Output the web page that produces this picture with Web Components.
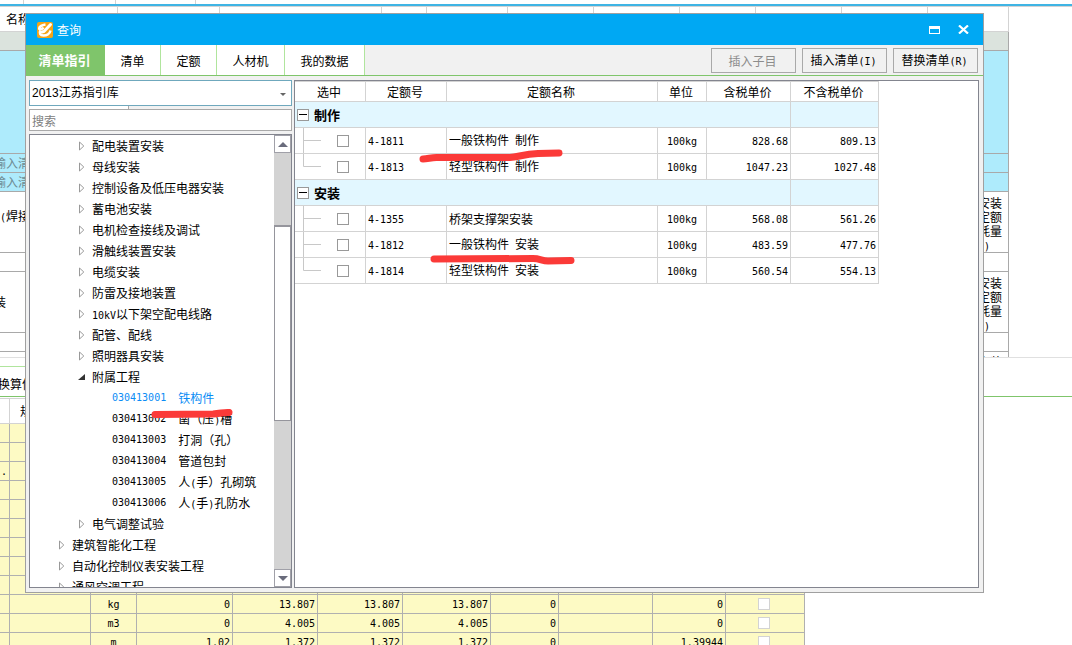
<!DOCTYPE html>
<html lang="zh-CN">
<head>
<meta charset="utf-8">
<title>查询</title>
<style>
html, body { margin: 0; height: 100%; }
body { font: 12px/14px "Noto Sans CJK SC", sans-serif; color: #000; background: #fff; }
</style>
</head>
<body>
<app-shell></app-shell>
<script>
const COMMON = `
  *, *::before, *::after { box-sizing: border-box; }
  button, input, select { font: inherit; color: inherit; margin: 0; border-radius: 0; }
  .n { font: 10px/12px "DejaVu Sans Mono", monospace; white-space: pre; }
  table { border-collapse: separate; border-spacing: 0; table-layout: fixed; }
  th, td { padding: 0; font-weight: normal; overflow: hidden; white-space: nowrap; }
  .tick { appearance: none; display: block; width: 12px; height: 12px; background: #fff; border: 1px solid #999; }
`;
/* Latin runs are set in the narrow monospace face. */
const mix = s => s.replace(/[ -~]+/g, m => `<span class="n">${m}</span>`);
const cols = list => `<colgroup>${list.map(w => `<col style="width:${w}px">`).join('')}</colgroup>`;
const sum = list => list.reduce((a, b) => a + b, 0);

class Base extends HTMLElement {
  constructor() {
    super();
    const t = document.createElement('template');
    t.innerHTML = `<style>${COMMON}${this.css()}</style>${this.html()}`;
    this.attachShadow({ mode: 'open' }).append(t.content.cloneNode(true));
  }
}

customElements.define('bill-grid', class extends Base {
  css() { return `
    :host { display: block; height: 352px; flex: none; overflow: hidden; border-top: 1px solid #d3d3d3; border-bottom: 1px solid #e0e0e0; }
    th { height: 25px; border-right: 1px solid #d3d3d3; border-bottom: 1px solid #d3d3d3; text-align: left; padding-left: 6px; }
    td { height: 19px; border-right: 1px solid #a9a9a9; border-bottom: 1px solid #a9a9a9; }
    .sum td { background: #dbe3dd; }
    .cyan td { background: #aeebfc; color: #6f8b94; }
    .big td { height: 103px; }
    .tall td { height: 61px; }
    .cut { text-indent: -6px; }
    .two { padding-bottom: 12px; }
    .note { padding: 4px 6px 0 0; vertical-align: top; }
    .note div { width: 24px; height: 56px; margin-left: auto; white-space: pre; }
    .note .n { line-height: 1px; }
    .part td { height: 19px; }
    .part .note { padding-top: 3px; }
    .part .note div { height: 14px; }
  `; }
  html() {
    const w = [118, 102, 162, 45, 81, 86, 86, 76, 86, 86, 81];
    const row = (cls, a = '', cutCls = '', z = '') =>
      `<tr class="${cls}"><td class="${cutCls}">${mix(a)}</td><td colspan="9"></td><td class="note">${z && `<div>${z}</div>`}</td></tr>`;
    const note = '安装\n定额\n耗量\n<span class="n"> )</span>';
    return `<table style="width:${sum(w)}px">${cols(w)}
      <thead><tr><th>名称</th>${'<th></th>'.repeat(10)}</tr></thead><tbody>
      ${row('sum')}${row('cyan big')}${row('cyan', '输入清单', 'cut')}${row('cyan', '输入清单', 'cut')}
      ${row('tall', '(焊接', 'two', note)}${row('')}${row('tall', '装', 'cut', note)}${row('')}${row('part', '', '', '安装')}
      </tbody></table>`;
  }
});

customElements.define('detail-grid', class extends Base {
  css() { return `
    :host { display: block; }
    nav { height: 39px; border-bottom: 1px solid #7fc56b; padding-top: 8px; }
    nav button { display: block; width: 60px; height: 30px; padding: 4px 0 0 4px; border: 0; border-top: 1px solid #b0e59d; border-right: 1px solid #b0e59d; background: #fff; text-indent: -6px; text-align: left; }
    table { margin-top: 1px; border-top: 1px solid #d3d3d3; }
    th { height: 25px; border-right: 1px solid #d3d3d3; border-bottom: 1px solid #d3d3d3; }
    td { height: 19px; line-height: 12px; background: #fdfac4; border-right: 1px solid #b0b0b0; border-bottom: 1px solid #b0b0b0; text-align: right; padding-right: 2px; }
    td.c { text-align: center; padding-right: 0; }
    .tick { margin: 0 auto; border-color: #d3d3d3; }
  `; }
  html() {
    const w = [10, 81, 46, 96, 85, 85, 88, 68, 94, 73, 79];
    const blank = a => `<tr><td>${mix(a)}</td>${'<td></td>'.repeat(10)}</tr>`;
    const row = (u, q, v, t) => `<tr><td></td><td></td><td class="c">${mix(u)}</td>${[q, v, v, v, '0', '', t].map(x => `<td>${mix(x)}</td>`).join('')}<td><input class="tick" type="checkbox" aria-label="${u}"></td></tr>`;
    return `<nav><button>换算信息</button></nav>
    <table style="width:${sum(w)}px">${cols(w)}
      <thead><tr><th></th><th>规格及型号</th>${'<th></th>'.repeat(9)}</tr></thead><tbody>
      ${blank('')}${blank('')}${blank('.')}${blank('').repeat(6)}
      ${row('kg', '0', '13.807', '0')}${row('m3', '0', '4.005', '0')}${row('m', '1.02', '1.372', '1.39944')}
      </tbody></table>`;
  }
});

customElements.define('guide-tree', class extends Base {
  css() { return `
    :host { display: flex; flex: 1; min-height: 0; border: 1px solid #83858f; background: #fff; }
    ul { list-style: none; margin: 0; padding: 0; flex: 1; overflow: hidden; }
    li { height: 21px; line-height: 20px; display: flex; align-items: center; white-space: pre; }
    li svg { width: 8px; height: 10px; flex: none; margin-right: 6px; }
    .l0 { padding-left: 28px; }
    .l1 { padding-left: 48px; }
    .l2 { padding-left: 82px; gap: 12px; }
    .on { color: #0a8cf5; }
    .bar { width: 17px; flex: none; background: #d3d3d3; display: flex; flex-direction: column; }
    .bar button { height: 18px; padding: 0; border: 1px solid #a0a0a8; background: #fff; display: grid; place-items: center; }
    .bar i { height: 72px; }
    .bar b { height: 196px; background: #fff; border: 1px solid #95959c; border-top-width: 2px; margin-bottom: auto; }
  `; }
  html() {
    const closed = '<svg viewBox="0 0 8 10"><path d="M1.500 1v8L5.800 5z" fill="#fff" stroke="#999"/></svg>';
    const open = '<svg viewBox="0 0 8 10"><path d="M7 2v6H0z" fill="#333"/></svg>';
    const items = [
      ...['配电装置安装', '母线安装', '控制设备及低压电器安装', '蓄电池安装', '电机检查接线及调试', '滑触线装置安装', '电缆安装', '防雷及接地装置', '10kV以下架空配电线路', '配管、配线', '照明器具安装'].map(t => [1, t]),
      [1, '附属工程', open],
      ...['铁构件', '凿（压)槽', '打洞（孔）', '管道包封', '人(手）孔砌筑', '人(手)孔防水'].map((t, i) => [2, t, '', `03041300${i + 1}`]),
      [1, '电气调整试验'], [0, '建筑智能化工程'], [0, '自动化控制仪表安装工程'], [0, '通风空调工程']
    ];
    return `<ul>${items.map(([l, t, ic = closed, code]) =>
      `<li class="l${l}${code === '030413001' ? ' on' : ''}">${ic}${code ? `<span class="n">${code}</span>` : ''}<span>${mix(t)}</span></li>`).join('')}</ul>
    <div class="bar"><button aria-label="向上"><svg width="10" height="5"><path d="M5 0l5 5H0z" fill="#6a6c7c"/></svg></button><i></i><b></b>
    <button aria-label="向下"><svg width="10" height="5"><path d="M0 0h10L5 5z" fill="#6a6c7c"/></svg></button></div>`;
  }
});

customElements.define('quota-table', class extends Base {
  css() { return `
    :host { display: block; flex: 1; min-width: 0; border: 1px solid #83858f; background: #fff; overflow: hidden; }
    table { border-top: 1px solid #d3d3d3; }
    th, td { height: 26px; border-right: 1px solid #d3d3d3; border-bottom: 1px solid #d3d3d3; }
    thead th { height: 20px; padding-right: 2px; }
    td.l { padding-left: 2px; }
    td.c { text-align: center; }
    td.r { text-align: right; padding-right: 2px; }
    .g th, .g td { background: #e2f7ff; }
    .g div { display: flex; align-items: center; height: 25px; padding-left: 2px; gap: 5px; font: bold 13px/16px "Noto Sans CJK SC", sans-serif; }
    .g button { width: 12px; height: 12px; padding: 0; background: #fff; border: 1px solid #999; display: grid; place-items: center; }
    .pick { display: flex; align-items: center; gap: 16px; height: 25px; }
    .pick svg { display: block; flex: none; }
  `; }
  html() {
    const w = [71, 81, 211, 49, 84, 88];
    const group = t => `<tr class="g"><th colspan="5"><div><button aria-label="折叠"><svg width="8" height="2"><path d="M0 0h8v1H0z"/></svg></button>${t}</div></th><td></td></tr>`;
    const row = (code, name, a, b, last) => `<tr><td><div class="pick"><svg width="26" height="25"><path d="M8.500 0V${last ? '12.500' : '25'}M8.500 12.500H26" fill="none" stroke="#c8c8c8"/></svg><input class="tick" type="checkbox" aria-label="${code}"></div></td>
      <td class="l">${mix(code)}</td><td class="l">${mix(name)}</td><td class="c">${mix('100kg')}</td><td class="r">${mix(a)}</td><td class="r">${mix(b)}</td></tr>`;
    return `<table style="width:${sum(w)}px">${cols(w)}<thead><tr>${['选中', '定额号', '定额名称', '单位', '含税单价', '不含税单价'].map(t => `<th>${t}</th>`).join('')}</tr></thead><tbody>
      ${group('制作')}${row('4-1811', '一般铁构件 制作', '828.68', '809.13')}${row('4-1813', '轻型铁构件 制作', '1047.23', '1027.48', 1)}
      ${group('安装')}${row('4-1355', '桥架支撑架安装', '568.08', '561.26')}${row('4-1812', '一般铁构件 安装', '483.59', '477.76')}${row('4-1814', '轻型铁构件 安装', '560.54', '554.13', 1)}
      </tbody></table>`;
  }
});

customElements.define('query-dialog', class extends Base {
  css() { return `
    :host { display: flex; flex-direction: column; background: #f1f1f1; border: 1px solid #a0a0a0; }
    header { height: 31px; flex: none; background: #00a8f3; color: #fff; display: flex; align-items: center; padding: 0 14px 0 11px; gap: 4px; }
    header span { flex: 1; }
    header div { display: flex; gap: 18px; }
    header button { border: 0; background: none; padding: 0; width: 11px; height: 12px; display: grid; place-items: center; }
    .tabs { height: 31px; flex: none; display: flex; border-bottom: 1px solid #7fc56b; }
    .tabs button { border: 0; border-right: 1px solid #b0e59d; background: #fff; padding: 2px 0 0; width: 56px; }
    .tabs .m { width: 68px; }
    .tabs .w { width: 80px; }
    .tabs .on { width: 79px; background: #7fc56b; color: #fff; font-weight: bold; font-size: 13px; border: 0; padding: 0 2px 0 0; }
    .acts { margin-left: auto; display: flex; gap: 6px; padding: 3px 5px 0 0; }
    .tabs .acts button { width: 85px; height: 25px; background: #f1f1f1; border: 1px solid #a9a9a9; padding: 0 2px 0 0; }
    .acts button:disabled { color: #8c8c8c; }
    main { flex: 1; min-height: 0; display: flex; gap: 2px; padding: 4px 4px 4px 3px; }
    .side { width: 263px; flex: none; display: flex; flex-direction: column; }
    .combo { display: grid; height: 26px; border: 1px solid #6fa8bd; background: #fff; grid-template-columns: 1fr 16px; align-items: center; }
    .combo select { appearance: none; border: 0; background: none; padding: 0 0 0 2px; height: 24px; grid-area: 1 / 1 / 2 / 3; outline: 0; font-family: "Liberation Sans", "Noto Sans CJK SC", sans-serif; }
    .combo svg { grid-area: 1 / 2; pointer-events: none; margin: 2px 0 0 5px; }
    .gap { width: 100px; height: 3px; background: #fff; border-right: 1px solid #a9a9a9; }
    .side input { height: 22px; border: 1px solid #a9a9a9; padding: 0 2px; background: #fff; margin-bottom: 3px; outline: 0; }
    .side input::placeholder { color: #808080; opacity: 1; }
  `; }
  html() { return `
    <header>
      <svg width="16" height="16" viewBox="0 0 16 16"><rect width="16" height="16" rx="2" fill="#f6a416"/><path d="M8.500 2.500C4.500 3 2 5 2.200 6.500s2 1 4.500-.8" fill="none" stroke="#fff" stroke-width="2.500"/><path d="M3.500 8.500C2 11 3 13.500 6.500 13.500S13 11.500 13.500 8.500" fill="none" stroke="#fff" stroke-width="2.500"/><path d="M13.500 2.500L7 9.500l-2 .5" fill="none" stroke="#fff" stroke-width="3" stroke-linecap="round"/></svg>
      <span>查询</span>
      <div><button aria-label="最大化"><svg width="11" height="8"><path d="M0 0h11v8H0zM1 3v4h9V3z" fill="#fff" fill-rule="evenodd"/></svg></button>
      <button aria-label="关闭"><svg width="11" height="9"><path d="M1 .5l9 8M10 .5l-9 8" stroke="#fff" stroke-width="2.200"/></svg></button></div>
    </header>
    <div class="tabs"><button class="on">清单指引</button><button>清单</button><button>定额</button><button class="m">人材机</button><button class="w">我的数据</button>
      <div class="acts"><button disabled>插入子目</button><button>${mix('插入清单(I)')}</button><button>${mix('替换清单(R)')}</button></div></div>
    <main>
      <div class="side">
        <label class="combo"><select aria-label="指引库"><option>2013江苏指引库</option></select><svg width="6" height="3"><path d="M0 0h6L3 3z" fill="#666"/></svg></label>
        <div class="gap"></div>
        <input type="text" placeholder="搜索" aria-label="搜索">
        <guide-tree></guide-tree>
      </div>
      <quota-table></quota-table>
    </main>`; }
});

customElements.define('red-marks', class extends Base {
  css() { return `:host { display: block; pointer-events: none; } svg { width: 100%; height: 100%; display: block; }`; }
  html() { return `<svg fill="none" stroke="#fb3a38" stroke-width="7" stroke-linecap="round" stroke-linejoin="round">
    <path d="M423 159C428 159 432 157 438 157.500L510 157.500C518 157 524 154 538 153.500L559 153"/>
    <path d="M434 259L533 258.500C540 258.500 542 261 548 261L571 260.500"/>
    <path d="M155 414.500L213 414C221 413.500 224 412 229 412.500"/></svg>`; }
});

customElements.define('app-shell', class extends Base {
  css() { return `
    :host { display: flex; flex-direction: column; height: 100vh; overflow: hidden; position: relative; }
    .strip { height: 6px; flex: none; display: flex; border-bottom: 2px solid #3fb4e4; }
    .strip i { border-right: 1px solid #d3d3d3; }
    .strip i:nth-child(1) { width: 24px; }
    .strip i:nth-child(2) { width: 92px; }
    .strip i:nth-child(3) { width: 80px; }
    query-dialog { position: absolute; inset: 13px 88px 52px 25px; }
    red-marks { position: absolute; inset: 0; }
  `; }
  html() { return `<div class="strip"><i></i><i></i><i></i></div><bill-grid></bill-grid><detail-grid></detail-grid><query-dialog></query-dialog><red-marks></red-marks>`; }
});
</script>
</body>
</html>
